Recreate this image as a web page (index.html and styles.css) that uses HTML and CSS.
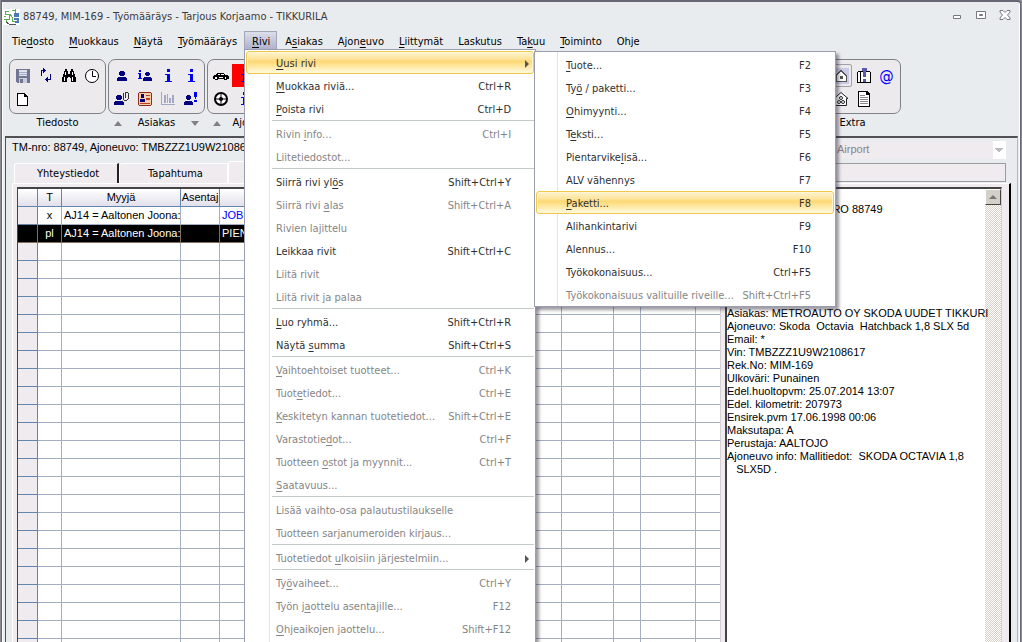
FILE: index.html
```html
<!DOCTYPE html>
<html lang="fi">
<head>
  <meta charset="UTF-8">
  <meta name="viewport" content="width=device-width, initial-scale=1.0">
  <title>88749, MIM-169 - Työmääräys</title>
  <link rel="stylesheet" href="styles.css">
</head>
<body>
  <svg class="sprite" aria-hidden="true">
    <symbol id="person" viewBox="0 0 16 16"><path fill="#000080" d="M6 3h4v1h1v3h-1v1h-4v-1h-1v-3h1zM4 9h8v1h1v3h-10v-3h1z"/></symbol>
    <symbol id="info" viewBox="0 0 16 16"><path fill="#0000ee" d="M7 1h3v3h-3zM5 6h5v7h2v1h-7v-1h2v-6h-2z"/></symbol>
  </svg>

  <div class="window">
    <header class="titlebar">
      <svg class="app-icon" viewBox="0 0 17 16">
        <rect width="17" height="16" fill="#fff"/>
        <path fill="none" stroke="#5cae5c" stroke-width="1" d="M6 2H2v3h4v5H1M1 7h2M3 10v3M9 2l3-1v3l2 1"/>
        <path fill="none" stroke="#4a7ab8" stroke-width="2" d="M12 5h3v2h-3zM11 10h4v3h-3"/>
        <path fill="none" stroke="#5cae5c" stroke-width="1" d="M7 5l2 3v4h3"/>
        <path fill="none" stroke="#555" stroke-width="1" d="M3 13l3 2h7"/>
      </svg>
      <h1 class="title">88749, MIM-169 - Työmääräys - Tarjous Korjaamo - TIKKURILA</h1>
      <div class="window-buttons">
        <button type="button" aria-label="Pienennä"><svg viewBox="0 0 12 12"><path fill="#fff" stroke="#77777f" d="M2.500 6.500h7v3h-7z"/></svg></button>
        <button type="button" aria-label="Palauta"><svg viewBox="0 0 12 12"><path fill="#fff" stroke="#77777f" d="M1.500 2.500h9v7h-9zM4.500 5.500h3v1h-3z"/></svg></button>
        <button type="button" aria-label="Sulje"><svg viewBox="0 0 12 12"><path fill="#fff" stroke="#77777f" d="M1 1.500h3l2 2 2-2h3v1.500l-2.500 3 2.500 3v1.500h-3l-2-2-2 2h-3v-1.500l2.500-3-2.500-3z"/></svg></button>
      </div>
    </header>

    <nav class="menubar">
      <button type="button">Tie<u>d</u>osto</button>
      <button type="button"><u>M</u>uokkaus</button>
      <button type="button"><u>N</u>äytä</button>
      <button type="button"><u>T</u>yömääräys</button>
      <div class="menu-holder">
        <button type="button" class="open"><u>R</u>ivi</button>
        <div class="menu">
          <button type="button" class="item active"><span><u>U</u>usi rivi</span><i class="arrow"></i></button>
          <button type="button" class="item"><span><u>M</u>uokkaa riviä...</span><span>Ctrl+R</span></button>
          <button type="button" class="item"><span><u>P</u>oista rivi</span><span>Ctrl+D</span></button>
          <hr>
          <button type="button" class="item" disabled><span>Rivin <u>i</u>nfo...</span><span>Ctrl+I</span></button>
          <button type="button" class="item" disabled><span>Liitetiedostot...</span></button>
          <hr>
          <button type="button" class="item"><span>Siirrä rivi yl<u>ö</u>s</span><span>Shift+Ctrl+Y</span></button>
          <button type="button" class="item" disabled><span>Siirrä rivi <u>a</u>las</span><span>Shift+Ctrl+A</span></button>
          <button type="button" class="item" disabled><span>Rivien lajittelu</span></button>
          <button type="button" class="item"><span>Leikkaa rivit</span><span>Shift+Ctrl+C</span></button>
          <button type="button" class="item" disabled><span>Liitä rivit</span></button>
          <button type="button" class="item" disabled><span>Liitä rivit ja palaa</span></button>
          <hr>
          <button type="button" class="item"><span><u>L</u>uo ryhmä...</span><span>Shift+Ctrl+R</span></button>
          <button type="button" class="item"><span>Näytä <u>s</u>umma</span><span>Shift+Ctrl+S</span></button>
          <hr>
          <button type="button" class="item" disabled><span><u>V</u>aihtoehtoiset tuotteet...</span><span>Ctrl+K</span></button>
          <button type="button" class="item" disabled><span>Tuot<u>e</u>tiedot...</span><span>Ctrl+E</span></button>
          <button type="button" class="item" disabled><span><u>K</u>eskitetyn kannan tuotetiedot...</span><span>Shift+Ctrl+E</span></button>
          <button type="button" class="item" disabled><span>Varastotie<u>d</u>ot...</span><span>Ctrl+F</span></button>
          <button type="button" class="item" disabled><span>Tuotteen <u>o</u>stot ja myynnit...</span><span>Ctrl+T</span></button>
          <button type="button" class="item" disabled><span><u>S</u>aatavuus...</span></button>
          <hr>
          <button type="button" class="item" disabled><span>Lisää vaihto-osa palautustilaukselle</span></button>
          <button type="button" class="item" disabled><span>Tuotteen sarjanumeroiden kirjaus...</span></button>
          <hr>
          <button type="button" class="item" disabled><span>Tuotetiedot <u>u</u>lkoisiin järjestelmiin...</span><i class="arrow"></i></button>
          <hr>
          <button type="button" class="item" disabled><span>Ty<u>ö</u>vaiheet...</span><span>Ctrl+Y</span></button>
          <button type="button" class="item" disabled><span>Työn j<u>a</u>ottelu asentajille...</span><span>F12</span></button>
          <button type="button" class="item" disabled><span><u>O</u>hjeaikojen jaottelu...</span><span>Shift+F12</span></button>
        </div>
        <div class="menu submenu">
          <button type="button" class="item"><span><u>T</u>uote...</span><span>F2</span></button>
          <button type="button" class="item"><span>Ty<u>ö</u> / paketti...</span><span>F3</span></button>
          <button type="button" class="item"><span><u>O</u>himyynti...</span><span>F4</span></button>
          <button type="button" class="item"><span>T<u>e</u>ksti...</span><span>F5</span></button>
          <button type="button" class="item"><span>Pientarvike<u>l</u>isä...</span><span>F6</span></button>
          <button type="button" class="item"><span>ALV vähennys</span><span>F7</span></button>
          <button type="button" class="item active"><span><u>P</u>aketti...</span><span>F8</span></button>
          <button type="button" class="item"><span>Alihankintarivi</span><span>F9</span></button>
          <button type="button" class="item"><span>Alennus...</span><span>F10</span></button>
          <button type="button" class="item"><span>Työkokonaisuus...</span><span>Ctrl+F5</span></button>
          <button type="button" class="item" disabled><span>Työkokonaisuus valituille riveille...</span><span>Shift+Ctrl+F5</span></button>
        </div>
      </div>
      <button type="button">A<u>s</u>iakas</button>
      <button type="button">Ajon<u>e</u>uvo</button>
      <button type="button"><u>L</u>iittymät</button>
      <button type="button">Laskutus</button>
      <button type="button">Ta<u>k</u>uu</button>
      <button type="button"><u>T</u>oiminto</button>
      <button type="button">Ohje</button>
    </nav>

    <div class="toolbar">
      <section class="group">
        <div class="icons">
          <button type="button" aria-label="Tallenna"><svg viewBox="0 0 16 16"><path fill="#6f7593" d="M1 1h14v14h-13l-1-1z"/><path fill="#dfe3ee" d="M4 2h8v6h-8z"/><path fill="#a5abc2" d="M4 4h8v1h-8zM4 6h8v1h-8z"/><path fill="#c9cddc" d="M4 10h8v5h-8z"/><path fill="#6f7593" d="M5 11h3v4h-3z"/></svg></button>
          <button type="button" aria-label="Päivitä"><svg viewBox="0 0 16 16"><path fill="#000080" d="M3 2h2v-2h1v1h1v1h1v1h-1v1h-1v1h-1v-2h-1v5h-1zM12 6h1v6h-3v2h-1v-1h-1v-1h-1v-1h1v-1h1v-1h1v2h2z"/></svg></button>
          <button type="button" aria-label="Etsi"><svg viewBox="0 0 16 16"><path d="M4 1h2v2h1v3h2v-3h1v-2h2v2h1v3h1v3h1v5h-5v-4h-1v-1h-2v1h-1v4h-5v-5h1v-3h1v-3h1z"/><path fill="#fff" d="M4 4h1v3h-1zM11 4h1v3h-1zM3 9h1v4h-1zM11 9h1v4h-1z"/></svg></button>
          <button type="button" aria-label="Historia"><svg class="smooth" viewBox="0 0 16 16"><circle cx="8" cy="8" r="6.500" fill="#fff" stroke="#000"/><path fill="none" stroke="#000" d="M8.500 3v5.500H12"/></svg></button>
          <button type="button" aria-label="Uusi"><svg viewBox="0 0 16 16"><path d="M2 2h8v1h1v1h1v1h1v10h-11z"/><path fill="#fff" d="M3 3h6v3h3v8h-9z"/></svg></button>
        </div>
        <h2>Tiedosto</h2>
      </section>

      <section class="group">
        <div class="icons">
          <button type="button" aria-label="Asiakas"><svg viewBox="0 0 16 16"><use href="#person"/></svg></button>
          <button type="button" aria-label="Asiakkaan tiedot"><svg viewBox="0 0 16 16"><path fill="#0000ee" d="M2 2h2v2h-2zM1 5h3v5h1v1h-4v-1h1v-4h-1z"/><path fill="#000080" d="M9 4h3v1h1v2h-1v1h-3v-1h-1v-2h1zM7 9h7v1h1v3h-9v-3h1z"/></svg></button>
          <button type="button" aria-label="Info 1"><svg viewBox="0 0 16 16"><use href="#info"/></svg></button>
          <button type="button" aria-label="Info 2"><svg viewBox="0 0 16 16"><use href="#info"/></svg></button>
          <button type="button" aria-label="Liitteet"><svg viewBox="0 0 16 16"><path fill="#000080" d="M3 4h4v1h1v3h-1v1h-4v-1h-1v-3h1zM1 10h8v1h1v3h-10v-3h1z"/><path fill="none" stroke="#333" d="M9.500 2v6l1 1.500h2l1.500-1.500v-6l-1-1h-1l-1 1v5"/></svg></button>
          <button type="button" aria-label="Kortti"><svg viewBox="0 0 16 16"><path fill="#8b2a20" d="M2 1h12v1h1v12h-1v1h-12v-1h-1v-12h1z"/><path fill="#f7cfa5" d="M2 2h12v12h-12z"/><path fill="#000080" d="M4 3h3v4h-3zM3 8h5v3h-5z"/><path fill="#c0392b" d="M9 4h4v1h-4zM9 7h4v2h-4zM3 12h10v1h-10z"/></svg></button>
          <button type="button" aria-label="Tilasto"><svg viewBox="0 0 16 16"><path fill="#a3a7c4" d="M1 1h1v12h13v1h-14zM4 4h2v8h-2zM7 3h1v9h-1zM9 7h2v5h-2zM12 4h2v8h-2z"/></svg></button>
          <button type="button" aria-label="Huomautus"><svg viewBox="0 0 16 16"><path fill="#000080" d="M4 4h3v1h1v3h-1v1h-3v-1h-1v-3h1zM2 10h7v1h1v3h-9v-3h1z"/><path fill="#0000ee" d="M11 1h3v5h-1v2h-1v-2h-1zM11 9h3v2h-3z"/></svg></button>
        </div>
        <div class="caption"><i class="chevron"></i><h2>Asiakas</h2><i class="chevron down"></i></div>
      </section>

      <section class="group">
        <div class="icons">
          <button type="button" aria-label="Auto"><svg viewBox="0 0 16 16"><path d="M4 5h7v1h1v1h3v1h1v3h-2v1h-3v-1h-6v1h-3v-1h-2v-3h1v-1h2v-1h1z"/><path fill="#fff" d="M5 6h2v1h-2zM8 6h3v1h-3zM2 9h2v2h-2zM12 9h1v2h-1zM6 9h4v1h-4z"/></svg></button>
          <button type="button" class="alert" aria-label="Auton tiedot"><svg viewBox="0 0 16 16"><use href="#info"/></svg></button>
          <span></span><span></span>
          <button type="button" aria-label="Renkaat"><svg class="smooth" viewBox="0 0 16 16"><circle cx="8" cy="8" r="6" fill="#fff" stroke="#000" stroke-width="2"/><path stroke="#000" stroke-width="1" d="M8 2v12M2 8h12"/><circle cx="8" cy="8" r="2"/></svg></button>
          <button type="button" aria-label="Info 3"><svg viewBox="0 0 16 16"><use href="#info"/></svg></button>
        </div>
        <div class="caption"><i class="chevron"></i><h2>Ajoneuvo</h2><i class="chevron down"></i></div>
      </section>

      <section class="group extra">
        <div class="icons">
          <span></span>
          <button type="button" class="pressed" aria-label="Koti"><svg viewBox="0 0 16 16"><path fill="#c9cbe6" d="M0 0h16v16h-16z"/><path fill="#fff" stroke="#555" d="M8 2.500l5 5v6h-10v-6z"/><path fill="#555" d="M7 8h3v3h-3z"/></svg></button>
          <button type="button" aria-label="Muistio"><svg viewBox="0 0 16 16"><path d="M2 3h12v1h1v11h-14v-11h1z"/><path fill="#fff" d="M2 4h12v10h-12z"/><path fill="#000" d="M4 4h1v10h-1z"/><path fill="#5a5ab4" d="M6 0h5v3h-1v6h-3v-6h-1zM7 11h3v3h-3z"/></svg></button>
          <button type="button" class="at" aria-label="Sähköposti">@</button>
          <span></span>
          <button type="button" aria-label="Varasto"><svg class="smooth" viewBox="0 0 16 16"><path fill="#fff" stroke="#222" d="M2.500 14.500v-7h-1.500l7-6 7 6h-1.500v7z"/><circle cx="8" cy="7" r="1.500" fill="none" stroke="#222"/><circle cx="6" cy="11" r="1.500" fill="none" stroke="#222"/><circle cx="10" cy="11" r="1.500" fill="none" stroke="#222"/></svg></button>
          <button type="button" aria-label="Asiakirja"><svg viewBox="0 0 16 16"><path d="M2 0h9l3 3v13h-12z"/><path fill="#fff" d="M3 1h7v3h3v11h-10z"/><path fill="#888" d="M4 4h5v1h-5zM4 6h8v1h-8zM4 8h8v1h-8zM4 10h8v1h-8zM4 12h8v1h-8z"/></svg></button>
        </div>
        <h2>Extra</h2>
      </section>
    </div>

    <main class="panel">
      <div class="order-row">
        <p>TM-nro: 88749, Ajoneuvo: TMBZZZ1U9W2108617</p>
        <select class="location" aria-label="Toimipaikka" disabled><option>Airport</option></select>
      </div>
      <div class="tabs">
        <button type="button" class="tab">Yhteystiedot</button>
        <button type="button" class="tab">Tapahtuma</button>
        <button type="button" class="tab current" aria-label="Rivit"></button>
        <input class="status" type="text" aria-label="Tila" readonly>
      </div>
      <div class="page">
        <div class="grid">
          <table>
            <colgroup>
              <col class="c-mark"><col class="c-type"><col class="c-seller"><col class="c-fitter"><col>
              <col class="c-a"><col class="c-b"><col class="c-c"><col class="c-d">
            </colgroup>
            <thead>
              <tr><th></th><th>T</th><th>Myyjä</th><th>Asentaj</th><th></th><th></th><th></th><th></th><th></th></tr>
            </thead>
            <tbody>
              <tr><th></th><td class="mid">x</td><td>AJ14 = Aaltonen Joona:</td><td></td><td class="job">JOB</td><td></td><td></td><td></td><td></td></tr>
              <tr class="selected"><th></th><td class="mid">pl</td><td>AJ14 = Aaltonen Joona:</td><td></td><td>PIENTARVIKE</td><td></td><td></td><td></td><td></td></tr>
              <tr><th></th><td></td><td></td><td></td><td></td><td></td><td></td><td></td><td></td></tr>
              <tr><th></th><td></td><td></td><td></td><td></td><td></td><td></td><td></td><td></td></tr>
              <tr><th></th><td></td><td></td><td></td><td></td><td></td><td></td><td></td><td></td></tr>
              <tr><th></th><td></td><td></td><td></td><td></td><td></td><td></td><td></td><td></td></tr>
              <tr><th></th><td></td><td></td><td></td><td></td><td></td><td></td><td></td><td></td></tr>
              <tr><th></th><td></td><td></td><td></td><td></td><td></td><td></td><td></td><td></td></tr>
              <tr><th></th><td></td><td></td><td></td><td></td><td></td><td></td><td></td><td></td></tr>
              <tr><th></th><td></td><td></td><td></td><td></td><td></td><td></td><td></td><td></td></tr>
              <tr><th></th><td></td><td></td><td></td><td></td><td></td><td></td><td></td><td></td></tr>
              <tr><th></th><td></td><td></td><td></td><td></td><td></td><td></td><td></td><td></td></tr>
              <tr><th></th><td></td><td></td><td></td><td></td><td></td><td></td><td></td><td></td></tr>
              <tr><th></th><td></td><td></td><td></td><td></td><td></td><td></td><td></td><td></td></tr>
              <tr><th></th><td></td><td></td><td></td><td></td><td></td><td></td><td></td><td></td></tr>
              <tr><th></th><td></td><td></td><td></td><td></td><td></td><td></td><td></td><td></td></tr>
              <tr><th></th><td></td><td></td><td></td><td></td><td></td><td></td><td></td><td></td></tr>
              <tr><th></th><td></td><td></td><td></td><td></td><td></td><td></td><td></td><td></td></tr>
              <tr><th></th><td></td><td></td><td></td><td></td><td></td><td></td><td></td><td></td></tr>
              <tr><th></th><td></td><td></td><td></td><td></td><td></td><td></td><td></td><td></td></tr>
              <tr><th></th><td></td><td></td><td></td><td></td><td></td><td></td><td></td><td></td></tr>
              <tr><th></th><td></td><td></td><td></td><td></td><td></td><td></td><td></td><td></td></tr>
              <tr><th></th><td></td><td></td><td></td><td></td><td></td><td></td><td></td><td></td></tr>
              <tr><th></th><td></td><td></td><td></td><td></td><td></td><td></td><td></td><td></td></tr>
              <tr><th></th><td></td><td></td><td></td><td></td><td></td><td></td><td></td><td></td></tr>
            </tbody>
          </table>
        </div>
        <div class="info">
          <div class="info-text">
            <p class="heading">TYÖMÄÄRÄYS NRO 88749</p>
            <p>Asiakas: METROAUTO OY SKODA UUDET TIKKURI</p>
            <p>Ajoneuvo: Skoda  Octavia  Hatchback 1,8 SLX 5d</p>
            <p>Email: *</p>
            <p>Vin: TMBZZZ1U9W2108617</p>
            <p>Rek.No: MIM-169</p>
            <p>Ulkoväri: Punainen</p>
            <p>Edel.huoltopvm: 25.07.2014 13:07</p>
            <p>Edel. kilometrit: 207973</p>
            <p>Ensirek.pvm 17.06.1998 00:06</p>
            <p>Maksutapa: A</p>
            <p>Perustaja: AALTOJO</p>
            <p>Ajoneuvo info: Mallitiedot:  SKODA OCTAVIA 1,8</p>
            <p>   SLX5D .</p>
          </div>
          <div class="scrollbar"><button type="button" aria-label="Vieritä ylös"></button></div>
        </div>
      </div>
    </main>
  </div>
</body>
</html>
```
FILE: styles.css
```css
* {
  box-sizing: border-box;
}

body {
  margin: 0;
  background: #8a8a92;
  color: #000;
  font-family: "Liberation Sans", Arial, sans-serif;
  font-size: 11px;
  line-height: 13px;
}

h1, h2, p {
  margin: 0;
  font-size: inherit;
  font-weight: normal;
}

button, input, select {
  padding: 0;
  border: none;
  background: none;
  color: inherit;
  font: inherit;
}

svg {
  display: block;
  shape-rendering: crispEdges;
}

svg.smooth {
  shape-rendering: auto;
}

.sprite {
  display: none;
}

.window {
  display: flex;
  flex-direction: column;
  height: 100vh;
  margin: 0 1px;
  overflow: hidden;
  border: 1px solid #666674;
  border-top-width: 2px;
  border-bottom: none;
  border-radius: 0 4px 0 0;
  background: #e9ecef;
  box-shadow: inset 1px 0 #fff, inset -1px 0 #fff;
}

/* title bar */
.titlebar {
  display: flex;
  flex: none;
  align-items: center;
  gap: 3px;
  height: 29px;
  padding: 0 9px 0 1px;
}

.app-icon {
  width: 17px;
  height: 16px;
}

.title {
  flex: 1;
  color: #3a3a40;
  font-family: "DejaVu Sans Condensed", "DejaVu Sans", sans-serif;
}

.window-buttons {
  display: flex;
  gap: 12px;
  padding-bottom: 3px;
}

.window-buttons svg {
  width: 12px;
  height: 12px;
  shape-rendering: auto;
}

/* menus */
.menubar {
  display: flex;
  flex: none;
  height: 20px;
  padding-left: 2px;
  font-family: "DejaVu Sans Condensed", "DejaVu Sans", sans-serif;
}

.menubar u {
  text-underline-offset: 2px;
}

.menubar > button,
.menu-holder > button {
  height: 20px;
  padding: 0 7px 0 8px;
}

.menu-holder {
  position: relative;
}

.menu-holder > .open {
  border: 1px solid #a2a6b6;
  border-bottom: none;
  padding: 0 6px 0 7px;
  background: linear-gradient(#dcdeea, #a9acc9);
}

.menu {
  position: absolute;
  z-index: 2;
  top: 18px;
  left: 0;
  width: 292px;
  padding: 1px 1px 2px;
  border: 1px solid #9a9eae;
  background: linear-gradient(#e4e4e8, #e4e4e8) 24px 0 / 1px 100% no-repeat #fff;
  box-shadow: 3px 3px 3px rgba(40, 30, 50, 0.45);
}

.submenu {
  z-index: 3;
  top: 20px;
  left: 290px;
  width: 302px;
  padding: 1px 1px 0;
  background-position: 22px 0;
}

.item {
  display: flex;
  align-items: center;
  justify-content: space-between;
  width: 100%;
  height: 23px;
  padding: 2px 22px 0 29px;
  border: 1px solid transparent;
  color: #303030;
}

.item:disabled {
  color: #858585;
}

.item.active {
  border: 1px solid #efc94c;
  border-radius: 3px;
  background: linear-gradient(#fff3cd, #fde6a2 30%, #fdd975 45%, #fee9a5 70%, #fffbe0);
  box-shadow: inset 0 0 0 1px #fff6d8;
}

.menu hr {
  height: 1px;
  margin: 0 0 1px 26px;
  border: none;
  background: #c5cbcd;
}

.arrow {
  margin-right: -18px;
  border: 4px solid transparent;
  border-right: none;
  border-left: 4px solid #555;
}

/* toolbar */
.toolbar {
  display: flex;
  flex: none;
  gap: 2px;
  padding: 8px 119px 0 7px;
  font-family: "DejaVu Sans Condensed", "DejaVu Sans", sans-serif;
}

.group {
  flex: none;
  width: 97px;
  text-align: center;
}

.group.extra {
  margin-left: auto;
}

.icons {
  display: grid;
  grid-template-columns: repeat(4, 23px);
  grid-auto-rows: 23px;
  height: 55px;
  padding: 4px 1px;
  border: 1px solid #808088;
  border-radius: 7px;
  background: #edeaee;
}

.icons button {
  display: flex;
  align-items: center;
  justify-content: center;
}

.icons svg {
  width: 16px;
  height: 16px;
}

.icons .alert {
  background: #f00;
}

.icons .pressed {
  border: 1px solid #a0a0a8;
  border-radius: 2px;
}

.icons .at {
  color: #00f;
  font-size: 16px;
}

.group h2 {
  height: 18px;
  line-height: 18px;
}

.caption {
  display: flex;
  align-items: center;
  justify-content: space-between;
  padding: 0 6px;
}

.chevron {
  border: 4px solid transparent;
  border-top: none;
  border-bottom: 5px solid #808080;
}

.chevron.down {
  border-top: 5px solid #808080;
  border-bottom: none;
}

/* work order */
.panel {
  display: flex;
  flex: 1;
  flex-direction: column;
  min-height: 0;
  margin: 4px 2px 0 3px;
  padding: 0 6px;
  border: 1px solid #b8b8b8;
  border-top: 2px solid #505055;
  border-left: 1px solid #505055;
  border-bottom: none;
}

.order-row {
  display: flex;
  align-items: center;
  justify-content: space-between;
  height: 23px;
  padding: 0 5px 0 0;
}

.order-row p {
  padding-bottom: 4px;
}

.location {
  width: 195px;
  height: 18px;
  padding-left: 26px;
  appearance: none;
  background:
    linear-gradient(45deg, transparent 50%, #bbb 50%) right 7px top 7px / 4px 4px no-repeat,
    linear-gradient(-45deg, transparent 50%, #bbb 50%) right 3px top 7px / 4px 4px no-repeat,
    linear-gradient(#fff, #fff) right / 13px 100% no-repeat #efebef;
  color: #85858a;
  opacity: 1;
}

.tabs {
  display: flex;
  align-items: flex-end;
  height: 22px;
  padding: 0 5px 0 2px;
  font-family: "DejaVu Sans Condensed", "DejaVu Sans", sans-serif;
}

.tab {
  width: 105px;
  height: 20px;
  padding-left: 4px;
  border-right: 2px solid #222;
  border-top: 1px solid #fff;
  border-left: 1px solid #fff;
  border-radius: 3px 0 0 0;
  background: #efebef;
}

.tab + .tab {
  width: 109px;
  border-right: 1px solid #fff;
}

.tab.current {
  height: 22px;
}

.status {
  flex: 1;
  height: 19px;
  margin-bottom: 1px;
  border: 1px solid #9c9ca0;
  background: #efebef;
}

.page {
  display: flex;
  flex: 1;
  gap: 4px;
  min-height: 0;
  padding: 3px 7px 0 4px;
  border-top: 1px solid #fff;
  border-left: 1px solid #fff;
  border-right: 2px solid #000;
  background: #efebef;
}

.grid {
  flex: 1;
  min-width: 0;
  overflow: hidden;
  border-top: 2px solid #444;
  border-left: 1px solid #444;
  border-right: 1px solid #d4d0d4;
  background: #fff;
}

table {
  width: 100%;
  table-layout: fixed;
  border-spacing: 0;
}

.c-mark { width: 20px; }
.c-type { width: 24px; }
.c-seller { width: 119px; }
.c-fitter { width: 39px; }
.c-a { width: 52px; }
.c-b { width: 27px; }
.c-c { width: 55px; }
.c-d { width: 24px; }

td, th {
  height: 18px;
  padding: 0 2px;
  overflow: hidden;
  border-right: 1px solid #a3afc0;
  border-bottom: 1px solid #a3afc0;
  font-weight: normal;
  text-align: left;
  white-space: nowrap;
}

td:last-child {
  border-right: none;
}

thead th {
  padding: 0;
  border-color: #6486ac;
  background: linear-gradient(#fff, #e2e0ea);
  text-align: center;
}

tbody th {
  border-color: #6486ac;
  background: #efebef;
}

.mid {
  text-align: center;
}

.job {
  color: #00f;
}

.selected td,
.selected th {
  border-color: #80705a;
  background: #000;
  color: #fff;
}

.info {
  display: flex;
  flex: none;
  width: 277px;
  border-top: 2px solid #444;
  border-left: 2px solid #444;
  border-right: 1px solid #d4d0c8;
  background: #fff;
}

/* long lines may run a little way over the scrollbar track */
.info-text {
  position: relative;
  z-index: 1;
  flex: 1;
  min-width: 0;
  padding-top: 14px;
}

.info-text p {
  white-space: pre;
}

.info-text .heading {
  margin-bottom: 91px;
  padding-left: 18px;
}

.scrollbar {
  width: 16px;
  background: repeating-conic-gradient(#d4d0c8 0 25%, #fff 0 50%) 0 0 / 2px 2px;
}

.scrollbar button {
  display: flex;
  align-items: center;
  justify-content: center;
  width: 16px;
  height: 16px;
  border: 1px solid #fff;
  border-right-color: #444;
  border-bottom-color: #444;
  background: #d4d0c8;
}

.scrollbar button::before {
  content: "";
  border: 4px solid transparent;
  border-top: none;
  border-bottom-color: #777;
}
```
